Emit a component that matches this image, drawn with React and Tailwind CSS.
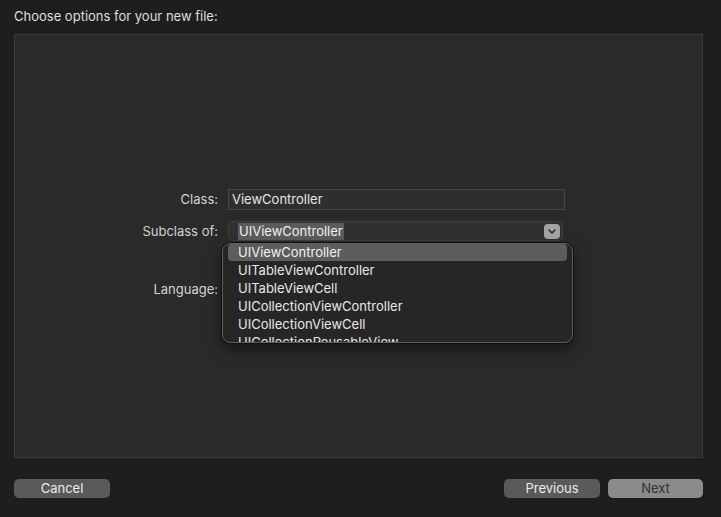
import React from "react";

const items = [
  "UIViewController",
  "UITableViewController",
  "UITableViewCell",
  "UICollectionViewController",
  "UICollectionViewCell",
  "UICollectionReusableView",
];

export default function App() {
  return (
    <div
      className="w-[721px] h-[517px] bg-[#1e1e1e] flex flex-col pl-[14px] pr-[18px] text-[13px] text-[#dcdcdc] overflow-hidden"
      style={{ fontFamily: "Inter, 'Noto Sans', sans-serif" }}
    >
      <div className="h-[34px] flex items-center pb-[1px] text-[#dedede]">
        Choose options for your new file:
      </div>
      <div className="relative h-[424px] border border-[#3b3b3b] bg-[#2a2a2a] pt-[154px]">
        <div className="grid grid-cols-[203px_1fr] gap-x-[10px] items-center">
          <div className="text-right text-[#d2d2d2]">Class:</div>
          <div className="w-[337px] h-[21px] border border-[#474747] bg-[#2e2e2e] flex items-center px-[3px] text-[#e6e6e6]">
            ViewController
          </div>
          <div className="text-right text-[#d2d2d2] mt-[12px]">Subclass of:</div>
          <div className="mt-[11px] w-[335px] h-[20px] rounded-[5px] border border-[#404040] bg-[#303030] flex items-center pl-[9px] pr-[2px]">
            <span className="bg-[#5c5c5c] text-[#f0f0f0] leading-[17px] px-[1px]">UIViewController</span>
            <div className="ml-auto w-[16px] h-[15px] rounded-[4px] bg-[#a3a3a3] flex items-center justify-center">
              <svg width="8" height="5" viewBox="0 0 8 5">
                <path d="M1 1 L4 4 L7 1" stroke="#2a2a2a" strokeWidth="1.6" fill="none" strokeLinecap="round" strokeLinejoin="round" />
              </svg>
            </div>
          </div>
          <div className="text-right text-[#d2d2d2] mt-[38px]">Language:</div>
          <div className="mt-[38px] h-[20px]"></div>
        </div>
        <div className="absolute left-[207px] top-[208px] w-[351px] h-[100px] rounded-[8px] border border-[#5e5e5e] bg-[#262626] shadow-[0_0_0_1px_#111111,0_6px_14px_rgba(0,0,0,0.5)] overflow-hidden px-[5px]">
          {items.map((it, i) => (
            <div
              key={it}
              className={
                i === 0
                  ? "h-[17px] mb-[1px] rounded-[4px] bg-[#5d5d5d] text-[#f2f2f2] flex items-center pl-[10px]"
                  : "h-[18px] text-[#e8e8e8] flex items-center pl-[10px] pb-[1px]"
              }
            >
              {it}
            </div>
          ))}
        </div>
      </div>
      <div className="flex-1 flex items-start pt-[21px]">
        <div className="w-[96px] h-[19px] rounded-[5px] bg-[#5a5a5a] text-[#ececec] flex items-center justify-center">
          Cancel
        </div>
        <div className="ml-auto w-[96px] h-[19px] rounded-[5px] bg-[#5a5a5a] text-[#ececec] flex items-center justify-center">
          Previous
        </div>
        <div className="ml-[8px] w-[95px] h-[19px] rounded-[5px] bg-[#8b8b8b] text-[#333333] flex items-center justify-center">
          Next
        </div>
      </div>
    </div>
  );
}
